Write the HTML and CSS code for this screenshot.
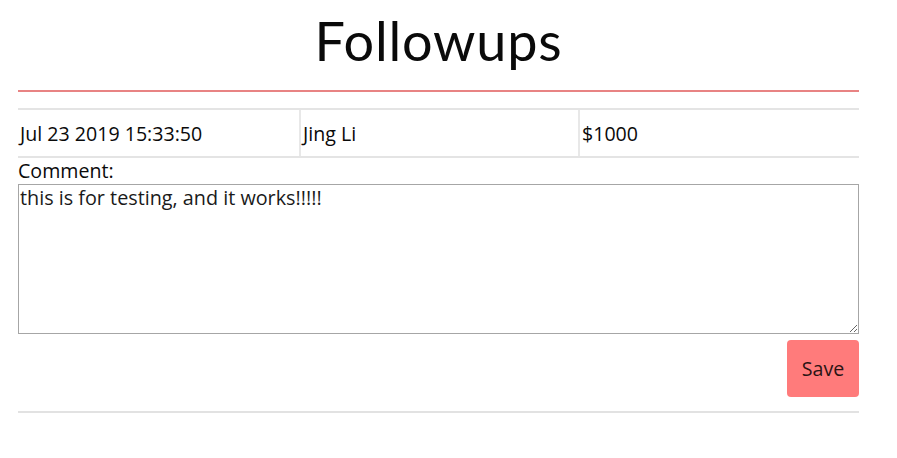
FILE: index.html
```html
<!DOCTYPE html>
<html>
<head>
<meta charset="utf-8">
<link rel="stylesheet" href="styles.css">
</head>
<body>
<div class="page">
  <header class="title-bar">
    <h1 class="title">Followups</h1>
  </header>
  <section class="followup">
    <div class="info-row">
      <div class="cell">Jul 23 2019 15:33:50</div>
      <div class="cell cell-divided">Jing Li</div>
      <div class="cell cell-divided">$1000</div>
    </div>
    <label class="comment-label" for="comment">Comment:</label>
    <textarea id="comment" class="comment">this is for testing, and it works!!!!!</textarea>
    <div class="actions">
      <button class="save-btn">Save</button>
    </div>
  </section>
</div>
</body>
</html>
```

FILE: styles.css
```css
html, body {
  margin: 0;
  padding: 0;
  background: #ffffff;
}

body {
  font-family: "Open Sans", "Liberation Sans", sans-serif;
  color: #0a0a0a;
}

.page {
  width: 841px;
  margin-left: 18px;
}

.title-bar {
  padding-top: 9px;
  height: 92px;
  box-sizing: border-box;
  border-bottom: 2px solid #e88383;
  display: flex;
  justify-content: center;
}

.title {
  margin: 0;
  font-family: Lato, "Noto Sans", sans-serif;
  font-weight: 400;
  font-size: 54px;
  line-height: 64px;
  color: #0a0a0a;
  letter-spacing: 0.8px;
}

.followup {
  margin-top: 16px;
  border-bottom: 2px solid #e2e2e2;
  padding-bottom: 14px;
}

.info-row {
  display: grid;
  grid-template-columns: 281px 279px 281px;
  border-top: 2px solid #e4e4e4;
  border-bottom: 2px solid #e4e4e4;
  height: 50px;
  box-sizing: border-box;
}

.cell {
  display: flex;
  align-items: center;
  padding-left: 2px;
  font-size: 19.6px;
  color: #0a0a0a;
}

.cell-divided {
  border-left: 2px solid #e8e8e8;
  padding-left: 2px;
}

.comment-label {
  display: block;
  font-size: 19.6px;
  line-height: 26px;
  color: #0a0a0a;
}

.comment {
  display: block;
  width: 841px;
  height: 150px;
  box-sizing: border-box;
  margin: 0;
  padding: 1px 1px;
  border: 1px solid #a6a6a6;
  font-family: "Open Sans", "Liberation Sans", sans-serif;
  font-size: 19.8px;
  line-height: 24px;
  color: #1a1a1a;
  resize: both;
}

.actions {
  display: flex;
  justify-content: flex-end;
  margin-top: 6px;
}

.save-btn {
  width: 72px;
  height: 57px;
  border: none;
  border-radius: 4px;
  background: #ff7b7b;
  color: #2a1414;
  font-family: "Open Sans", "Liberation Sans", sans-serif;
  font-size: 19.6px;
  padding: 0;
}
```
